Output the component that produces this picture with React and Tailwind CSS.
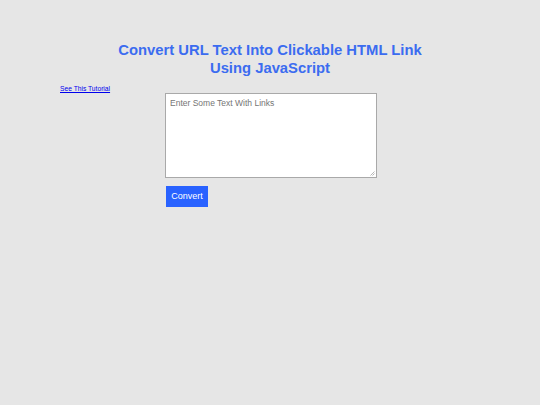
export default function App() {
  return (
    <div className="w-[540px] h-[405px] bg-[#e6e6e6] font-['Liberation_Sans',Arial,sans-serif] overflow-hidden">
      <div className="pt-[42px]">
        <h1 className="text-center text-[14.8px] leading-[17.5px] font-bold text-[#3b6cf0]">
          Convert URL Text Into Clickable HTML Link
          <br />
          Using JavaScript
        </h1>
      </div>
      <div className="pl-[60px] mt-[8px] h-[8px] leading-[8px]">
        <a href="#" className="block text-[6.7px] leading-[8px] text-[#0000ee] underline">See This Tutorial</a>
      </div>
      <div className="pl-[165px]">
        <div className="relative w-[212px] h-[85px] bg-white border border-[#a9a9a9] px-[4px] pt-[4px]">
          <div className="text-[8.5px] leading-[10px] text-[#757575]">Enter Some Text With Links</div>
          <svg className="absolute right-[1px] bottom-[1px]" width="5" height="5" viewBox="0 0 5 5">
            <path d="M4.5 0.5 L0.5 4.5 M4.5 2.5 L2.5 4.5" stroke="#999" strokeWidth="0.7" />
          </svg>
        </div>
        <button className="block mt-[8px] ml-[1px] w-[42px] h-[21px] bg-[#2962ff] text-white text-[9px] leading-[21px]">Convert</button>
      </div>
    </div>
  );
}
